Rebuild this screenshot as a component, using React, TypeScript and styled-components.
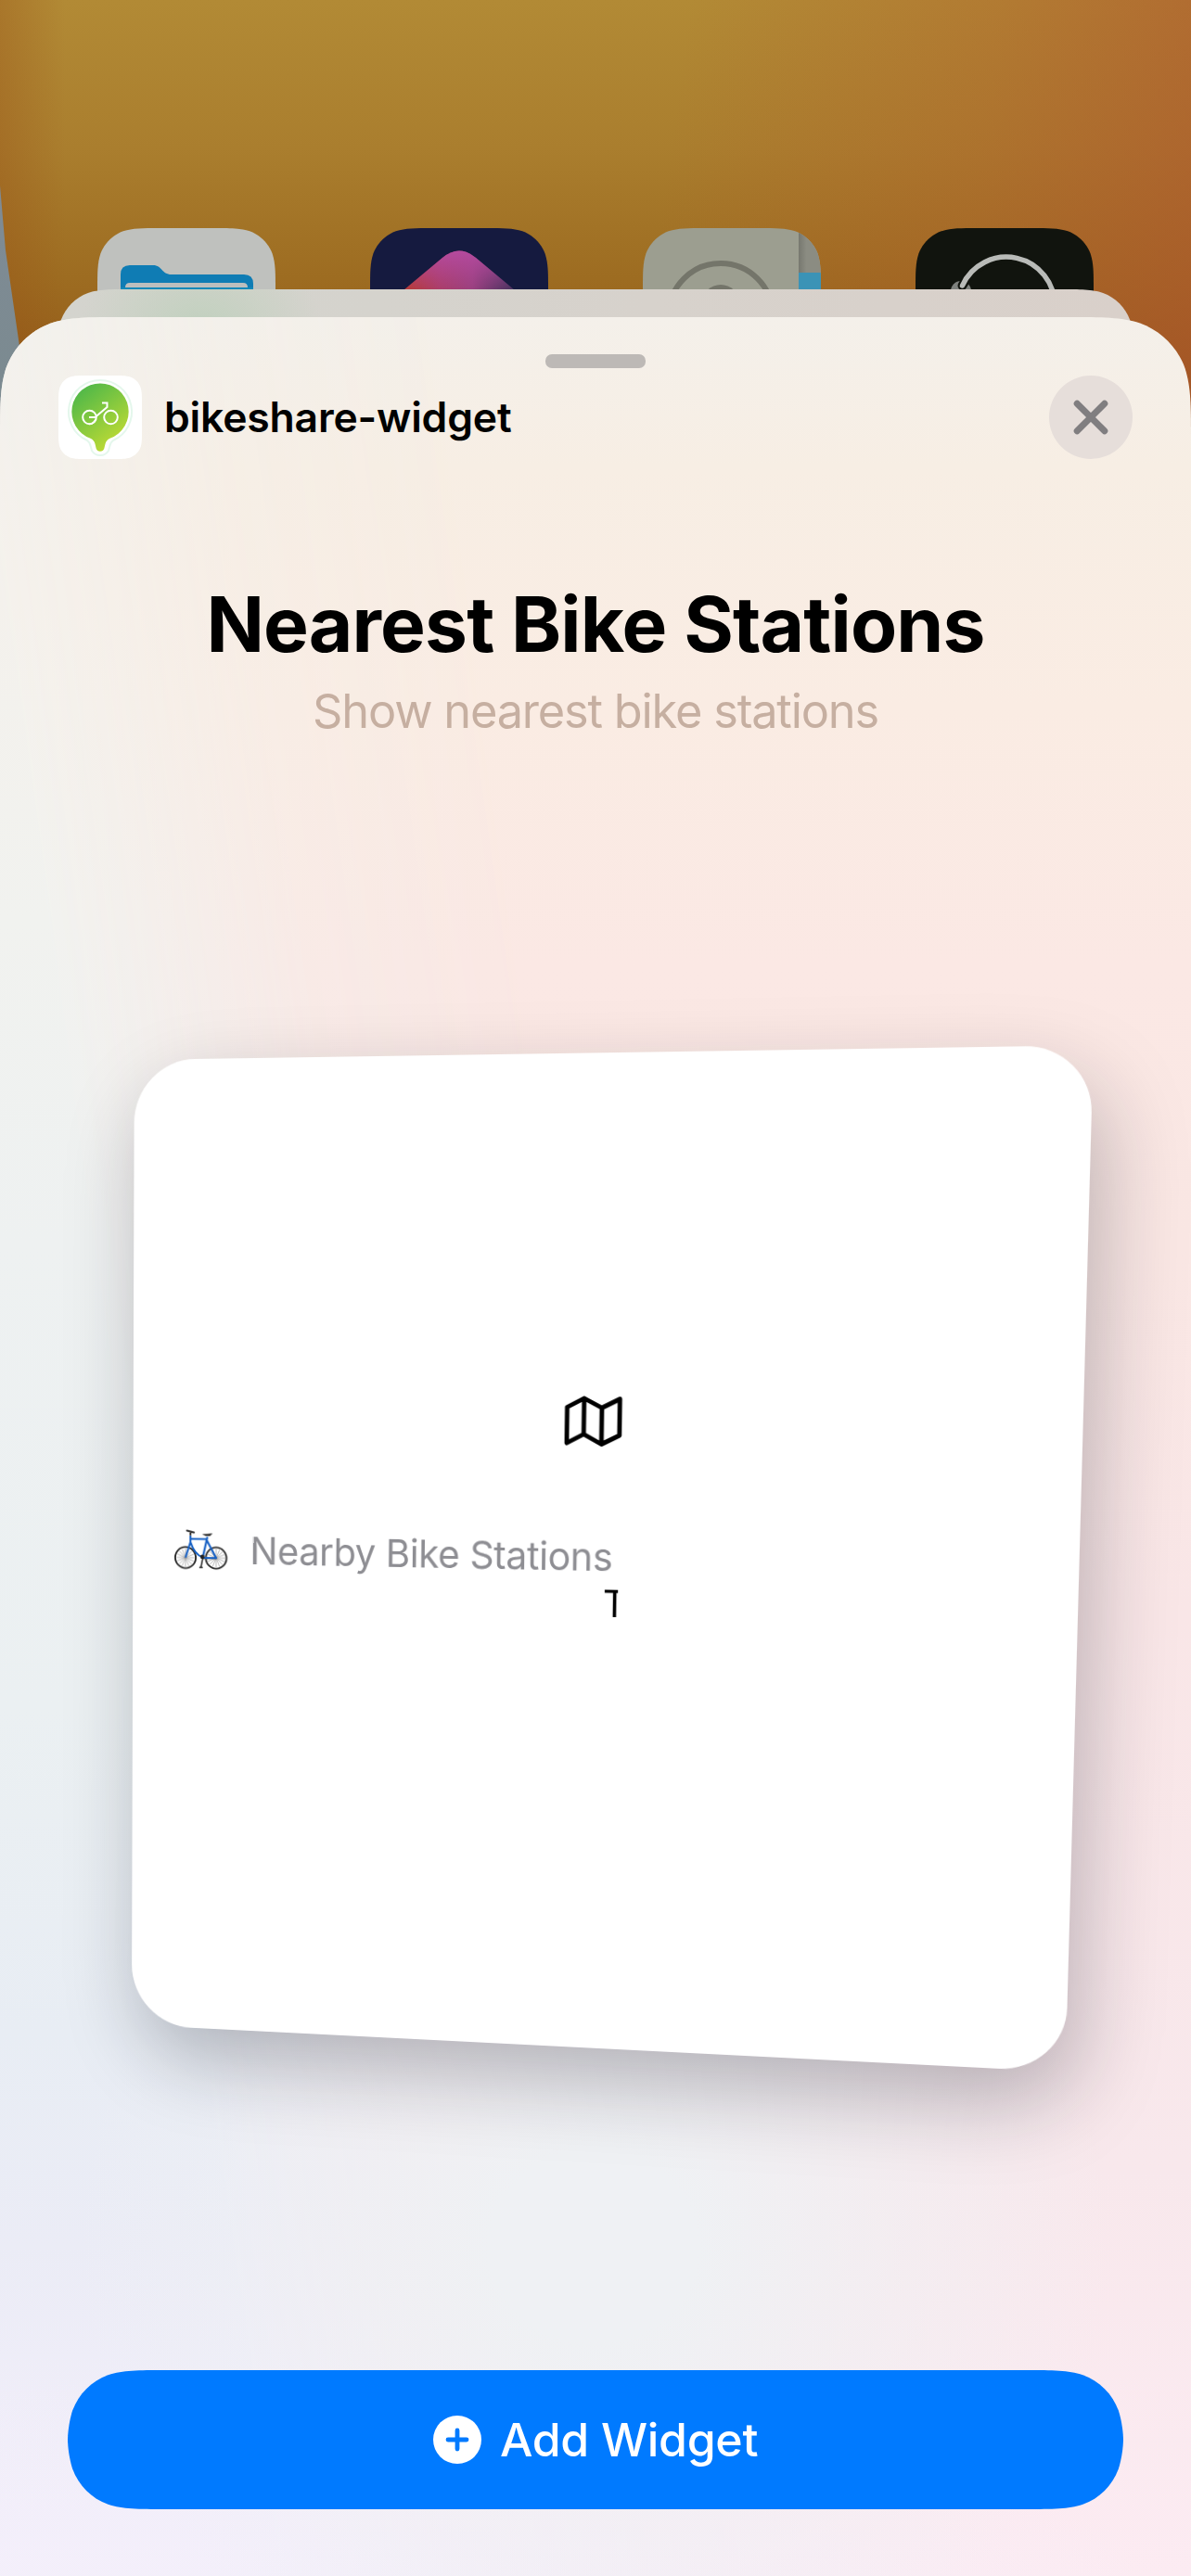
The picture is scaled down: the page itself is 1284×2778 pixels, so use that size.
import React from "react";
import styled, { createGlobalStyle } from "styled-components";

/* ---------- geometry helpers ---------- */

// Rounded rectangle with continuous (squircle-like) corners.
function smoothRect(w: number, h: number, r: number, bottom = true): string {
  const ex = Math.min(1.528665 * r, w / 2);
  const ey = Math.min(1.528665 * r, h / 2);
  const a = 1.08849296 * r;
  const ax = Math.min(a, ex);
  const ay = Math.min(a, ey);
  const b = 0.86840694 * r;
  const c = 0.63149379 * r;
  const d = 0.37282383 * r;
  const e = 0.16905956 * r;
  const f = 0.07491139 * r;
  const top =
    `M ${ex} 0 L ${w - ex} 0 C ${w - ax} 0 ${w - b} 0 ${w - c} ${f} ` +
    `C ${w - d} ${e} ${w - e} ${d} ${w - f} ${c} C ${w} ${b} ${w} ${ay} ${w} ${ey} `;
  const base = bottom
    ? `L ${w} ${h - ey} C ${w} ${h - ay} ${w} ${h - b} ${w - f} ${h - c} ` +
      `C ${w - e} ${h - d} ${w - d} ${h - e} ${w - c} ${h - f} C ${w - b} ${h} ${w - ax} ${h} ${w - ex} ${h} ` +
      `L ${ex} ${h} C ${ax} ${h} ${b} ${h} ${c} ${h - f} C ${d} ${h - e} ${e} ${h - d} ${f} ${h - c} ` +
      `C 0 ${h - b} 0 ${h - ay} 0 ${h - ey} `
    : `L ${w} ${h} L 0 ${h} `;
  return (
    top +
    base +
    `L 0 ${ey} C 0 ${ay} 0 ${b} ${f} ${c} C ${e} ${d} ${d} ${e} ${c} ${f} C ${b} 0 ${ax} 0 ${ex} 0 Z`
  );
}

type Point = [number, number];

// matrix3d that maps a w×h box onto the quad TL, TR, BR, BL.
function quadMatrix(w: number, h: number, q: [Point, Point, Point, Point]): string {
  const [[x0, y0], [x1, y1], [x2, y2], [x3, y3]] = q;
  const dx1 = x1 - x2;
  const dx2 = x3 - x2;
  const sx = x0 - x1 + x2 - x3;
  const dy1 = y1 - y2;
  const dy2 = y3 - y2;
  const sy = y0 - y1 + y2 - y3;
  const det = dx1 * dy2 - dx2 * dy1;
  const g = (sx * dy2 - dx2 * sy) / det;
  const k = (dx1 * sy - sx * dy1) / det;
  const m = [
    (x1 - x0 + g * x1) / w, (y1 - y0 + g * y1) / w, 0, g / w,
    (x3 - x0 + k * x3) / h, (y3 - y0 + k * y3) / h, 0, k / h,
    0, 0, 1, 0,
    x0, y0, 0, 1,
  ];
  return `matrix3d(${m.map((v) => v.toFixed(9)).join(",")})`;
}

const CARD_W = 1010;
const CARD_H = 1060;
const cardTilt = quadMatrix(CARD_W, CARD_H, [
  [7.8, 16],
  [1041.8, 0.2],
  [1011.6, 1107.5],
  [5, 1056.5],
]);

/* ---------- styles ---------- */

const Global = createGlobalStyle`
  * { box-sizing: border-box; }
  body {
    margin: 0;
    font-family: Inter, "Liberation Sans", sans-serif;
    -webkit-font-smoothing: antialiased;
  }
`;

const Screen = styled.div`
  position: relative;
  width: 1284px;
  height: 2778px;
  overflow: hidden;
  display: flex;
  flex-direction: column;
  background:
    linear-gradient(90deg, rgba(150, 75, 20, 0.3) 0, rgba(150, 75, 20, 0) 70px),
    linear-gradient(98deg, rgba(182, 92, 50, 0) 55%, rgba(178, 90, 44, 0.32) 80%, rgba(176, 84, 46, 0.62) 100%),
    linear-gradient(180deg, #b28a35 0, #aa7e2e 160px, #9d6c21 300px, #8f5416 450px);
  background-size: 100% 480px;
  background-repeat: no-repeat;
`;

const EdgeShape = styled.div`
  position: absolute;
  left: 0;
  top: 200px;
  width: 40px;
  height: 280px;
  background: linear-gradient(180deg, #7f8b95, #7a8a8f);
  clip-path: polygon(0 0, 6px 70px, 22px 180px, 36px 280px, 0 280px);
`;

const HomeRow = styled.div`
  display: flex;
  justify-content: space-between;
  padding: 246px 105px 0;
  flex: none;
`;

const HomeIcon = styled.svg`
  display: block;
  width: 192px;
  height: 192px;
  clip-path: path("${smoothRect(192, 192, 44)}");
`;

const BackSheet = styled.div`
  position: relative;
  flex: none;
  width: 1160px;
  height: 160px;
  margin: -126px auto 0;
  background:
    radial-gradient(ellipse 130px 90px at 155px 40px, rgba(190, 208, 188, 0.85), rgba(200, 210, 195, 0)),
    linear-gradient(90deg, #d4d4ce 0, #d5d3cd 30%, #d7d2cc 55%, #d9d0ca 100%);
  clip-path: path("${smoothRect(1160, 160, 52, false)}");
`;

const Sheet = styled.main`
  position: relative;
  flex: 1;
  margin-top: -130px;
  display: flex;
  flex-direction: column;
  align-items: center;
  padding: 40px 0 72px;
  background: linear-gradient(
    180deg,
    #f4f0ea 0,
    #f7eee4 160px,
    #faece3 420px,
    #fbe8e4 700px,
    #fae7e4 1000px,
    #f9e6e7 1400px,
    #f8e8ec 2000px,
    #fcebf2 2436px
  );
  clip-path: path("${smoothRect(1284, 2436, 87, false)}");

  &::before {
    content: "";
    position: absolute;
    inset: 0;
    background: linear-gradient(
      180deg,
      #f2f1ed 0,
      #f4f1ec 300px,
      #f1f2ef 650px,
      #eef1f1 1000px,
      #ebf0f2 1500px,
      #e8edf4 1850px,
      #ebecf6 2080px,
      #f4effb 2436px
    );
    mask-image: linear-gradient(82deg, #000 18%, rgba(0, 0, 0, 0.7) 25%, rgba(0, 0, 0, 0.25) 35%, transparent 51%);
  }

  &::after {
    content: "";
    position: absolute;
    inset: 0;
    background:
      radial-gradient(ellipse 560px 520px at 640px 2080px, rgba(239, 241, 244, 1) 20%, rgba(239, 241, 244, 0) 100%),
      radial-gradient(ellipse 900px 300px at 380px 2500px, rgba(243, 239, 250, 0.9), rgba(243, 239, 250, 0));
  }

  > * {
    z-index: 1;
  }
`;

const Grabber = styled.div`
  flex: none;
  width: 108px;
  height: 15px;
  border-radius: 7px;
  background: #bdb9b6;
`;

const Header = styled.header`
  flex: none;
  width: 100%;
  height: 90px;
  margin-top: 8px;
  padding: 0 63px;
  display: flex;
  align-items: center;
`;

const AppIcon = styled.svg`
  width: 90px;
  height: 90px;
  clip-path: path("${smoothRect(90, 90, 20)}");
`;

const AppName = styled.span`
  flex: 1;
  margin-left: 24px;
  font-size: 44.5px;
  line-height: 54px;
  font-weight: 600;
  letter-spacing: -0.2px;
  color: #000;
`;

const CloseButton = styled.button`
  width: 90px;
  height: 90px;
  padding: 0;
  border: 0;
  border-radius: 50%;
  display: grid;
  place-items: center;
  background: #e6deda;
`;

const Title = styled.h1`
  margin: 129px 0 0;
  font-size: 82px;
  line-height: 100px;
  font-weight: 700;
  letter-spacing: -0.85px;
  color: #000;
`;

const Subtitle = styled.p`
  margin: 13px 0 0;
  font-size: 50.5px;
  line-height: 60px;
  letter-spacing: -1.2px;
  color: #c6afa1;
`;

const Stage = styled.section`
  flex: none;
  width: 1010px;
  height: 1107px;
  margin-top: 330px;
`;

const WidgetCard = styled.article`
  width: ${CARD_W}px;
  height: ${CARD_H}px;
  border-radius: 68px;
  background: #fff;
  box-shadow: 10px 36px 86px rgba(18, 24, 36, 0.27);
  transform-origin: 0 0;
  transform: ${cardTilt};
  padding-top: 359px;
  display: flex;
  flex-direction: column;
`;

const MapGlyph = styled.svg`
  align-self: center;
  flex: none;
  width: 62px;
  height: 54px;
`;

const StationRow = styled.div`
  display: flex;
  align-items: center;
  height: 60px;
  margin-top: 87px;
  padding-left: 46px;
`;

const Bike = styled.svg`
  flex: none;
  width: 62px;
  height: 44px;
`;

const StationLabel = styled.span`
  margin-left: 24px;
  font-size: 41px;
  line-height: 48px;
  letter-spacing: -0.4px;
  color: #8e8e93;
  white-space: nowrap;
`;

const ClippedLetter = styled.div`
  width: 16px;
  height: 40px;
  margin-left: 518px;
  overflow: hidden;
  font-size: 39px;
  line-height: 40px;
  color: #000;
`;

const AddButton = styled.button`
  flex: none;
  width: 1138px;
  height: 150px;
  margin-top: auto;
  padding: 0;
  border: 0;
  display: flex;
  align-items: center;
  justify-content: center;
  gap: 20px;
  font: 500 50px/60px Inter, "Liberation Sans", sans-serif;
  letter-spacing: -0.3px;
  color: #fff;
  background: #007aff;
  clip-path: path("${smoothRect(1138, 150, 69)}");
`;

/* ---------- icons ---------- */

const FilesIcon = () => (
  <HomeIcon viewBox="0 0 192 192">
    <rect width="192" height="192" fill="#bfc1be" />
    <path d="M25 80V50q0-10 10-10h25c10 0 9 10 20 10h78q10 0 10 10v20z" fill="#0f7cb4" />
    <path d="M30 64q0-5 5-5h122q5 0 5 5z" fill="#bcbebe" />
    <rect x="25" y="64" width="143" height="60" fill="#1288b8" />
  </HomeIcon>
);

const ShortcutsIcon = () => (
  <HomeIcon viewBox="0 0 192 192">
    <defs>
      <linearGradient id="sc" x1="0" y1="0.2" x2="1" y2="0.2">
        <stop offset="0" stopColor="#b93a30" />
        <stop offset="0.32" stopColor="#ab3d68" />
        <stop offset="0.62" stopColor="#9a407f" />
        <stop offset="1" stopColor="#40305a" />
      </linearGradient>
      <linearGradient id="sp" x1="0" y1="0" x2="0" y2="1">
        <stop offset="0" stopColor="#b44a9e" />
        <stop offset="1" stopColor="#b44a9e" stopOpacity="0" />
      </linearGradient>
    </defs>
    <rect width="192" height="192" fill="#151a3f" />
    <path d="M36 67l42-35q18-15 36 0l42 35v60H36z" fill="url(#sc)" />
    <path d="M36 67l42-35q18-15 36 0l42 35z" fill="url(#sp)" />
  </HomeIcon>
);

const ContactsIcon = () => (
  <HomeIcon viewBox="0 0 192 192">
    <defs>
      <linearGradient id="tab" x1="0" y1="0" x2="1" y2="0">
        <stop offset="0" stopColor="#77786f" />
        <stop offset="0.35" stopColor="#8b8c82" />
      </linearGradient>
    </defs>
    <rect width="192" height="192" fill="#9c9e90" />
    <rect x="168" width="24" height="48" fill="url(#tab)" />
    <rect x="168" y="48" width="24" height="60" fill="#3b93b6" />
    <circle cx="84" cy="94" r="56" fill="none" stroke="#74756a" strokeWidth="6" />
    <circle cx="84" cy="81" r="20" fill="#74756a" />
  </HomeIcon>
);

const LoopIcon = () => (
  <HomeIcon viewBox="0 0 192 192">
    <rect width="192" height="192" fill="#11140e" />
    <circle cx="49" cy="68" r="11" fill="#7e817d" />
    <path d="M50.500 62A52 52 0 0 1 146 69V90" fill="none" stroke="#11140e" strokeWidth="10" strokeLinecap="round" />
    <path d="M50.500 62A52 52 0 0 1 150 84" fill="none" stroke="#b9bbb8" strokeWidth="5.500" strokeLinecap="round" />
  </HomeIcon>
);

const BikeshareIcon = () => (
  <AppIcon viewBox="0 0 90 90">
    <defs>
      <linearGradient id="pin" x1="0.15" y1="0.05" x2="0.7" y2="0.9">
        <stop offset="0" stopColor="#4db749" />
        <stop offset="1" stopColor="#b9d935" />
      </linearGradient>
    </defs>
    <rect width="90" height="90" fill="#fff" />
    <path
      d="M45 5a34 34 0 0 1 14 65q-3 2-4 7l-1 4q-3 5-9 5t-9-5l-1-4q-1-5-4-7A34 34 0 0 1 45 5z"
      fill="none"
      stroke="#d9f3e4"
      strokeWidth="2"
      opacity="0.7"
    />
    <path d="M45 8.500a30.500 30.500 0 0 1 10.500 59.200q-4 1.800-5 6l-1.200 5q-1 3-4.300 3t-4.300-3l-1.200-5q-1-4.200-5-6A30.500 30.500 0 0 1 45 8.500z" fill="url(#pin)" />
    <g fill="none" stroke="#fff" strokeWidth="2">
      <circle cx="33.500" cy="45" r="7.300" />
      <circle cx="56.500" cy="45" r="7.300" />
      <path d="M33 45h6.500L52.500 34V29.500h-5.500M33.500 52.300q4 0 7-5" />
    </g>
  </AppIcon>
);

const CloseGlyph = () => (
  <svg width="38" height="38" viewBox="0 0 38 38">
    <path d="M4.200 4.200l29.600 29.600M33.800 4.200L4.200 33.800" stroke="#807e80" strokeWidth="7" strokeLinecap="round" />
  </svg>
);

const spokes = Array.from({ length: 8 }, (_, i) => (i * Math.PI) / 8);

const Wheel = ({ cx }: { cx: number }) => (
  <g>
    <circle cx={cx} cy="31" r="11.600" fill="none" stroke="#2b2b2b" strokeWidth="1.900" />
    {spokes.map((t) => (
      <line
        key={t}
        x1={cx - 10 * Math.cos(t)}
        y1={31 - 10 * Math.sin(t)}
        x2={cx + 10 * Math.cos(t)}
        y2={31 + 10 * Math.sin(t)}
        stroke="#8a8a8a"
        strokeWidth="0.600"
      />
    ))}
  </g>
);

const BikeGlyph = () => (
  <Bike viewBox="0 0 62 44">
    <Wheel cx={13.5} />
    <Wheel cx={48} />
    <path d="M48 31.500H33" stroke="#333" strokeWidth="1.500" fill="none" />
    <path
      d="M13.500 31L19 14V7M19 10.500H37M19 14Q24 28 33 30.500L38 8M37 11L48 31H33"
      fill="none"
      stroke="#1660c4"
      strokeWidth="2.200"
      strokeLinejoin="round"
    />
    <path d="M15 1.500l8 2M19 6V3" stroke="#2b2b2b" strokeWidth="2" strokeLinecap="round" fill="none" />
    <path d="M32 5q6 0 12-1l-3 3h-5z" fill="#2b2b2b" />
    <circle cx="32.500" cy="30" r="2.400" fill="#222" />
    <path d="M33 31l-2 10M29 41.500h4" stroke="#222" strokeWidth="1.500" fill="none" />
  </Bike>
);

const PlusBadge = () => (
  <svg width="52" height="52" viewBox="0 0 52 52">
    <circle cx="26" cy="26" r="26" fill="#fff" />
    <path d="M26 16v20M16 26h20" stroke="#007aff" strokeWidth="4.800" strokeLinecap="round" />
  </svg>
);

/* ---------- page ---------- */

export default function App() {
  return (
    <>
      <Global />
      <Screen>
        <EdgeShape />
        <HomeRow>
          <FilesIcon />
          <ShortcutsIcon />
          <ContactsIcon />
          <LoopIcon />
        </HomeRow>
        <BackSheet />
        <Sheet>
          <Grabber />
          <Header>
            <BikeshareIcon />
            <AppName>bikeshare-widget</AppName>
            <CloseButton aria-label="Close">
              <CloseGlyph />
            </CloseButton>
          </Header>
          <Title>Nearest Bike Stations</Title>
          <Subtitle>Show nearest bike stations</Subtitle>
          <Stage>
            <WidgetCard>
              <MapGlyph viewBox="0 0 62 54">
                <path
                  d="M3 12.500L21 3L40 13L59 3.500V42L40 51.500L21 41L3 50.500ZM21 3V41M40 13V51.500"
                  fill="none"
                  stroke="#000"
                  strokeWidth="4.800"
                  strokeLinejoin="round"
                />
              </MapGlyph>
              <StationRow>
                <BikeGlyph />
                <StationLabel>Nearby Bike Stations</StationLabel>
              </StationRow>
              <ClippedLetter>T</ClippedLetter>
            </WidgetCard>
          </Stage>
          <AddButton>
            <PlusBadge />
            Add Widget
          </AddButton>
        </Sheet>
      </Screen>
    </>
  );
}
